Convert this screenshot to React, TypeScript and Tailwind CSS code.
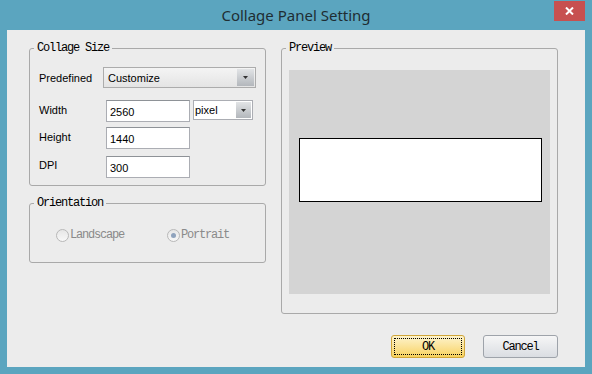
import React from "react";

const mono = { fontFamily: '"Liberation Mono", "DejaVu Sans Mono", monospace' };
const sans = { fontFamily: '"Liberation Sans", Arial, sans-serif' };

function Arrow() {
  return (
    <svg width="5" height="3" viewBox="0 0 5 3">
      <path d="M0 0 H5 L2.5 3 Z" fill="#333" />
    </svg>
  );
}

function Legend({ children }: { children: React.ReactNode }) {
  return (
    <legend
      className="ml-[4px] px-[3px] text-[12px] leading-[14px] tracking-[-1.2px] text-black"
      style={mono}
    >
      {children}
    </legend>
  );
}

function TextBox({ value }: { value: string }) {
  return (
    <div className="flex h-[22px] w-[84px] items-center border border-[#abadb3] border-t-[#8e9297] bg-white pl-[3px] pt-[2px] text-[11px] text-black">
      {value}
    </div>
  );
}

function Radio({ label, checked }: { label: string; checked?: boolean }) {
  return (
    <div className="flex items-center">
      <div className="flex h-[13px] w-[13px] items-center justify-center rounded-full border border-[#b8b8b8] bg-gradient-to-b from-[#e6e6e6] to-[#f8f8f8]">
        {checked && <div className="h-[5px] w-[5px] rounded-full bg-[#8fa3bd]" />}
      </div>
      <span
        className="ml-[1px] text-[12px] leading-[13px] tracking-[-1.2px] text-[#8a8a8a]"
        style={mono}
      >
        {label}
      </span>
    </div>
  );
}

export default function App() {
  return (
    <div className="relative flex h-[374px] w-[592px] flex-col bg-[#5ba5bf]" style={sans}>
      {/* title bar */}
      <div className="flex h-[30px] items-center justify-center pt-[1px]">
        <span
          className="text-[15px] text-[#1f2d33]"
          style={{ fontFamily: '"Noto Sans", "Open Sans", sans-serif' }}
        >
          Collage Panel Setting
        </span>
      </div>
      <div className="absolute right-[7px] top-[1px] flex h-[20px] w-[31px] items-center justify-center bg-[#c75050]">
        <svg width="9" height="8" viewBox="0 0 9 8">
          <path d="M1 0.5 L8 7.5 M8 0.5 L1 7.5" stroke="white" strokeWidth="2" />
        </svg>
      </div>

      {/* client */}
      <div className="mx-[7px] mb-[7px] flex flex-1 flex-col bg-[#ececec] pl-[22px] pt-[11px]">
        <div className="flex gap-[15px]">
          {/* left column */}
          <div className="flex w-[237px] flex-col">
            <fieldset className="rounded-[3px] border border-[#a9a9a9]">
              <Legend>Collage Size</Legend>
              <div className="flex flex-col pb-[7px] pl-[9px] pt-[12px] text-[11px] text-black">
                <div className="flex items-start">
                  <div className="w-[64px] pt-[3px]">Predefined</div>
                  <div className="flex h-[21px] w-[153px] items-center border border-[#acacac] bg-gradient-to-b from-[#f4f4f4] to-[#e4e4e4] pl-[4px] pr-[1px]">
                    <span className="flex-1 pt-[2px]">Customize</span>
                    <div className="flex h-[17px] w-[17px] items-center justify-center bg-gradient-to-b from-[#e2e4e6] to-[#b3b7bc]">
                      <Arrow />
                    </div>
                  </div>
                </div>
                <div className="mt-[12px] flex items-start">
                  <div className="w-[67px] pt-[2px]">Width</div>
                  <TextBox value="2560" />
                  <div className="ml-[3px] flex h-[20px] w-[60px] items-center border border-[#abadb3] bg-white pl-[1px] pr-[1px]">
                    <span className="flex-1">pixel</span>
                    <div className="flex h-[16px] w-[15px] items-center justify-center bg-gradient-to-b from-[#e2e4e6] to-[#b3b7bc]">
                      <Arrow />
                    </div>
                  </div>
                </div>
                <div className="mt-[5px] flex items-start">
                  <div className="w-[67px] pt-[2px]">Height</div>
                  <TextBox value="1440" />
                </div>
                <div className="mt-[7px] flex items-start">
                  <div className="w-[67px] pt-[1px]">DPI</div>
                  <TextBox value="300" />
                </div>
              </div>
            </fieldset>

            <fieldset className="mt-[10px] rounded-[3px] border border-[#a9a9a9]">
              <Legend>Orientation</Legend>
              <div className="flex pb-[20px] pl-[26px] pt-[19px]">
                <div className="w-[111px]">
                  <Radio label="Landscape" />
                </div>
                <Radio label="Portrait" checked />
              </div>
            </fieldset>
          </div>

          {/* right column */}
          <fieldset className="h-[273px] w-[277px] rounded-[3px] border border-[#a9a9a9]">
            <Legend>Preview</Legend>
            <div className="pl-[7px] pt-[15px]">
              <div className="h-[224px] w-[261px] bg-[#d4d4d4] pl-[10px] pt-[68px]">
                <div className="h-[64px] w-[243px] border border-black bg-white" />
              </div>
            </div>
          </fieldset>
        </div>

        {/* buttons */}
        <div className="mt-[21px] flex justify-end gap-[18px] pr-[27px]">
          <div className="flex h-[23px] w-[74px] items-center justify-center rounded-[3px] border border-[#d0a63a] bg-gradient-to-b from-[#fdf3cc] to-[#f8d25a] p-[2px]">
            <div
              className="flex h-full w-full items-center justify-center border border-dotted border-black text-[12px] tracking-[-1.2px] text-black"
              style={mono}
            >
              OK
            </div>
          </div>
          <div
            className="flex h-[23px] w-[75px] items-center justify-center rounded-[3px] border border-[#9ea3aa] bg-gradient-to-b from-[#f6f6f6] to-[#dadde2] text-[12px] tracking-[-1.2px] text-black"
            style={mono}
          >
            Cancel
          </div>
        </div>
      </div>
    </div>
  );
}
